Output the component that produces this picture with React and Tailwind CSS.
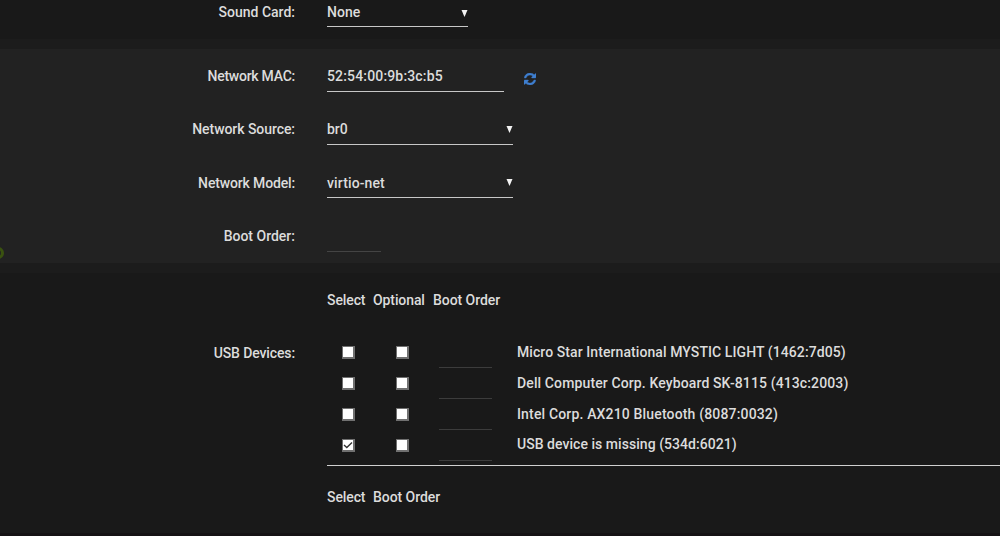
const devices = [
  { name: "Micro Star International MYSTIC LIGHT (1462:7d05)", selected: false, tracking: "tracking-[0.08px]" },
  { name: "Dell Computer Corp. Keyboard SK-8115 (413c:2003)", selected: false, tracking: "tracking-[0.12px]" },
  { name: "Intel Corp. AX210 Bluetooth (8087:0032)", selected: false, tracking: "tracking-[0.16px]" },
  { name: "USB device is missing (534d:6021)", selected: true, tracking: "tracking-[0.04px] leading-[28px]" },
];

function Row({ label, className = "", children }) {
  return (
    <div className={`flex ${className}`}>
      <div className="w-[295px] shrink-0 text-right">{label}</div>
      <div className="ml-8 flex">{children}</div>
    </div>
  );
}

function Select({ value, className }) {
  return (
    <div className={`flex justify-between border-b border-[#c8c8c8] ${className}`}>
      <span>{value}</span>
      <svg viewBox="0 0 7 7" className="mt-[10px] h-[7px] w-[7px] fill-[#f2f2f2]">
        <path d="M.5 0h6L3.500 7z" />
      </svg>
    </div>
  );
}

function RefreshIcon() {
  return (
    <svg viewBox="0 0 1536 1536" className="mt-[10px] ml-[20px] h-3 w-3 fill-[#3f7fd0] stroke-[#3f7fd0]" strokeWidth="50">
      <path d="M1511 928q0 5-1 7-64 268-268 434.500t-478 166.500q-146 0-282.500-55t-243.500-157l-129 129q-19 19-45 19t-45-19-19-45v-448q0-26 19-45t45-19h448q26 0 45 19t19 45-19 45l-137 137q71 66 161 102t187 36q134 0 250-65t186-179q11-17 53-117 8-23 30-23h192q13 0 22.500 9.500t9.500 22.500zm25-800v448q0 26-19 45t-45 19h-448q-26 0-45-19t-19-45 19-45l138-138q-148-137-349-137-134 0-250 65t-186 179q-11 17-53 117-8 23-30 23h-199q-13 0-22.500-9.500t-9.500-22.500v-7q65-268 270-434.500t480-166.500q146 0 284 55.500t245 156.500l130-129q19-19 45-19t45 19 19 45z" />
    </svg>
  );
}

function Checkbox({ checked }) {
  return (
    <span className="flex h-[13px] w-[13px] shrink-0 items-center justify-center border border-r-2 border-b-2 border-[#707070] bg-white">
      {checked && (
        <svg viewBox="0 0 10 10" className="h-[10px] w-[10px]" fill="none" stroke="#333" strokeWidth="1.4">
          <path d="M1 5 3.800 7.500 9 2.500" />
        </svg>
      )}
    </span>
  );
}

export default function App() {
  return (
    <div className="flex h-[536px] w-[1000px] flex-col overflow-hidden bg-[#1c1c1c] font-['Roboto',sans-serif] text-[14px] font-medium whitespace-nowrap text-[#dcdcdc]">
      <section className="h-[39px] bg-[#191919]">
        <Row label="Sound Card:" className="leading-[25px]">
          <Select value="None" className="h-[27px] w-[141px]" />
        </Row>
      </section>

      <section className="relative mt-[10px] h-[214px] bg-[#222222] pt-[14px]">
        <Row label={<span className="tracking-[-0.25px]">Network MAC:</span>} className="h-[29px] leading-[27px]">
          <div className="w-[177px] border-b border-[#c8c8c8] tracking-[0.16px]">52:54:00:9b:3c:b5</div>
          <RefreshIcon />
        </Row>
        <Row label={<span className="tracking-[-0.06px]">Network Source:</span>} className="mt-6 h-[29px] leading-[27px]">
          <Select value="br0" className="w-[186px]" />
        </Row>
        <Row label={<span className="tracking-[-0.15px]">Network Model:</span>} className="mt-6 h-[29px] leading-[28px]">
          <Select value="virtio-net" className="w-[186px] tracking-[0.12px]" />
        </Row>
        <Row label="Boot Order:" className="mt-[25px] h-[29px] leading-[27px]">
          <div className="w-[54px] border-b border-[#444444]" />
        </Row>
        <span className="absolute top-[198px] -left-[8px] h-3 w-3 rounded-full border-[3px] border-[#3a5210]" />
      </section>

      <section className="mt-[10px] h-[260px] bg-[#191919] pt-[14px]">
        <Row className="h-[27px] leading-[27px]">
          <span className="w-[46px] tracking-[-0.1px]">Select</span>
          <span className="w-[60px] tracking-[-0.1px]">Optional</span>
          <span className="tracking-[-0.05px]">Boot Order</span>
        </Row>
        <div className="mt-[23px] flex">
          <div className="w-[295px] shrink-0 text-right leading-[33px] tracking-[-0.12px]">USB Devices:</div>
          <div className="ml-8 flex-1 border-b border-[#d0d0d0] pb-1">
            {devices.map((device) => (
              <div key={device.name} className="flex h-[31px] pl-[15px] leading-[30px]">
                <div className="flex w-[97px] gap-[41px] pt-[9px]">
                  <Checkbox checked={device.selected} />
                  <Checkbox />
                </div>
                <div className="w-[53px] border-b border-[#3c3c3c]" />
                <span className={`ml-[25px] ${device.tracking}`}>{device.name}</span>
              </div>
            ))}
          </div>
        </div>
        <Row className="mt-[18px] leading-[27px]">
          <span className="w-[46px] tracking-[-0.1px]">Select</span>
          <span className="tracking-[-0.05px]">Boot Order</span>
        </Row>
      </section>
      <div className="h-[3px] bg-[#151214]" />
    </div>
  );
}
